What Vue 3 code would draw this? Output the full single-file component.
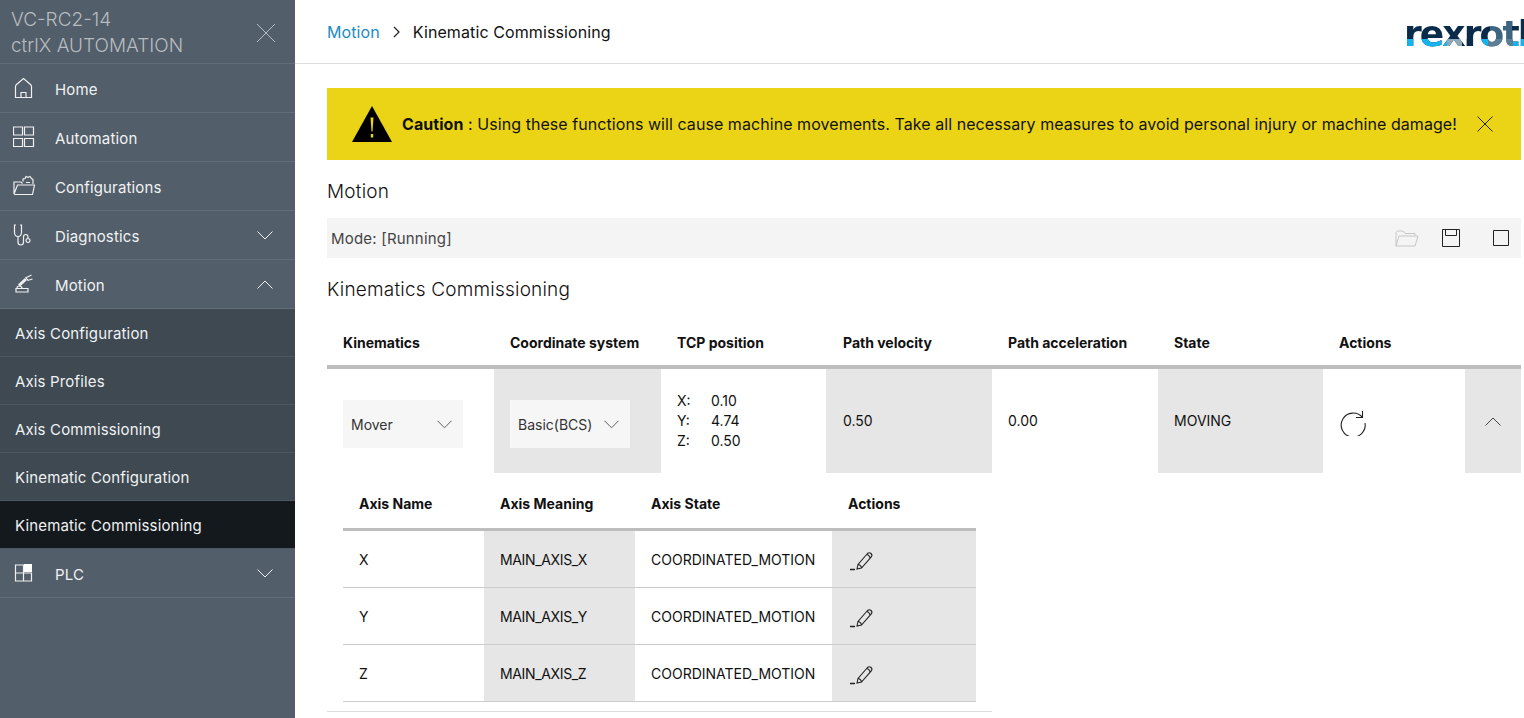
<script setup>
const subs = ['Axis Configuration', 'Axis Profiles', 'Axis Commissioning', 'Kinematic Configuration', 'Kinematic Commissioning']
const axes = [
  { n: 'X', m: 'MAIN_AXIS_X' },
  { n: 'Y', m: 'MAIN_AXIS_Y' },
  { n: 'Z', m: 'MAIN_AXIS_Z' }
]
const heads = ['Kinematics', 'Coordinate system', 'TCP position', 'Path velocity', 'Path acceleration', 'State', 'Actions', '']
</script>

<template>
  <div class="page">
    <aside class="side">
      <div class="brand">
        <div class="brand-text">VC-RC2-14<br />ctrlX AUTOMATION</div>
        <svg class="brand-x" width="20" height="20" viewBox="0 0 20 20"><path d="M1 1 19 19M19 1 1 19" /></svg>
      </div>
      <div class="item">
        <svg class="ic" viewBox="0 0 22 22"><path d="M2.500 20.500V9.500Q2.500 8.500 3.500 7.500L10.500 1.500l7 6q1 1 1 2V20.500ZM8 20.500v-5h5v5" /></svg>
        <span>Home</span>
      </div>
      <div class="item">
        <svg class="ic" viewBox="0 0 22 22"><path d="M.5 1h9v8h-9ZM11.500 1h9v8h-9ZM.5 12.500h9v8h-9ZM11.500 12.500h9v8h-9Z" /></svg>
        <span>Automation</span>
      </div>
      <div class="item">
        <svg class="ic" viewBox="0 0 22 22"><path d="M1 19V7h7l1.500 1.500M1 19.500h18.500L21.500 10H4.500L1 19M10 6.500V4l2-.5 1-2 2 .8 2-.8 1.500 2 1.500 1V9M13 7.500h4" /></svg>
        <span>Configurations</span>
      </div>
      <div class="item">
        <svg class="ic" viewBox="0 0 22 22"><path d="M3 1H1.500v7c0 3 1.800 4.500 3.500 4.500S8.500 11 8.500 8V1H7M5 12.500V18c0 2 1.300 3 2.800 3s2.700-1 2.700-3v-5c0-1.500 1-2.500 2.200-2.500S15 11.500 15 13v1.500M15 14.500a2 2 0 1 0 .01 0" /></svg>
        <span>Diagnostics</span>
        <svg class="chev" viewBox="0 0 16 9"><path d="M.5.500 8 8l7.500-7.500" /></svg>
      </div>
      <div class="item">
        <svg class="ic" viewBox="0 0 22 22"><path d="M3 15.500h12v3.500H3ZM4 15.500c0-2 1-2.500 2-2.500s3 .5 3 2.500M13.500 4.500l5-2.500M14.500 7.500l5-1.500M12.500 4 15 7.500" /><path class="arm" d="M6 12.500 13 6" /></svg>
        <span>Motion</span>
        <svg class="chev" viewBox="0 0 16 9"><path d="M.5 8.500 8 1l7.500 7.500" /></svg>
      </div>
      <div
        v-for="(s, i) in subs"
        :key="s"
        class="sub"
        :class="{ active: i === subs.length - 1 }"
      >{{ s }}</div>
      <div class="item">
        <svg class="ic" viewBox="0 0 22 22"><path d="M2.500 3h8v8h-8ZM2.500 11v8h8v-8M10.500 19h8v-8h-8" /><rect class="fill" x="11" y="2" width="8" height="8" /></svg>
        <span>PLC</span>
        <svg class="chev" viewBox="0 0 16 9"><path d="M.5.500 8 8l7.500-7.500" /></svg>
      </div>
    </aside>

    <main class="main">
      <header class="top">
        <div class="crumbs">
          <span class="link">Motion</span>
          <svg class="crumb-sep" viewBox="0 0 7 12"><path d="M1 1l5 5-5 5" /></svg>
          <span>Kinematic Commissioning</span>
        </div>
        <div class="logo">rexroth</div>
      </header>

      <div class="content">
        <div class="banner">
          <svg class="warn" viewBox="0 0 40 36">
            <path d="M20 0 40 36H0Z" fill="#000" />
            <path d="M18.500 11.500h3l-1 14h-1Z" fill="#ebd416" />
            <rect x="18.800" y="28" width="2.400" height="3.500" fill="#ebd416" />
          </svg>
          <div class="banner-text"><b>Caution</b> : Using these functions will cause machine movements. Take all necessary measures to avoid personal injury or machine damage!</div>
          <svg class="banner-x" viewBox="0 0 16 16"><path d="M.5.500l15 15M15.500.500l-15 15" /></svg>
        </div>

        <h2 class="title first">Motion</h2>
        <div class="toolbar">
          <span>Mode: [Running]</span>
          <div class="tools">
            <svg class="tool t-folder" viewBox="0 0 24 17"><path d="M1 16V2.500L2.500 1H8l2 2.500h10v2.500M1 16h19l3-10H4L1 16Z" /></svg>
            <svg class="tool t-save" viewBox="0 0 18 18"><path d="M.5.500h17v17H.5ZM3.500.500v6h11v-6" /></svg>
            <svg class="tool t-stop" viewBox="0 0 16 16"><path d="M.5.500h15v15H.5Z" /></svg>
          </div>
        </div>
        <h2 class="title second">Kinematics Commissioning</h2>

        <div class="kin">
          <div class="kin-head">
            <div v-for="(h, i) in heads" :key="i" class="kh">{{ h }}</div>
          </div>
          <div class="kin-row">
            <div class="kc">
              <div class="select"><span>Mover</span><svg class="sel-chev" viewBox="0 0 16 9"><path d="M.5.500 8 8l7.500-7.500" /></svg></div>
            </div>
            <div class="kc grey">
              <div class="select"><span>Basic(BCS)</span><svg class="sel-chev" viewBox="0 0 16 9"><path d="M.5.500 8 8l7.500-7.500" /></svg></div>
            </div>
            <div class="kc tcp">
              <div class="tcp-grid">
                <span>X:</span><span>0.10</span>
                <span>Y:</span><span>4.74</span>
                <span>Z:</span><span>0.50</span>
              </div>
            </div>
            <div class="kc grey">0.50</div>
            <div class="kc">0.00</div>
            <div class="kc grey">MOVING</div>
            <div class="kc">
              <svg class="refresh" viewBox="0 0 26 26"><path d="M22.500 7.500A12 12 0 1 0 25 13M22.500 1v6.500H16" /></svg>
            </div>
            <div class="kc grey center">
              <svg class="row-chev" viewBox="0 0 16 9"><path d="M.5 8.500 8 1l7.500 7.500" /></svg>
            </div>
          </div>
        </div>

        <div class="axis-wrap">
          <div class="axis">
            <div class="ah">Axis Name</div>
            <div class="ah">Axis Meaning</div>
            <div class="ah">Axis State</div>
            <div class="ah">Actions</div>
            <template v-for="a in axes" :key="a.n">
              <div class="ac">{{ a.n }}</div>
              <div class="ac grey meaning">{{ a.m }}</div>
              <div class="ac">COORDINATED_MOTION</div>
              <div class="ac grey">
                <svg class="pen" viewBox="0 0 25 20"><path d="M1 18.500h5" stroke-width="1.500" /><path d="M8 18l1-4.500L18.500 2.500c1-1 2.500-1 3.500 0s1.200 2.300.3 3.300L12.500 17ZM9 13.500c1.500 0 3.500 2 3.500 3.500M17.500 3.500c1.500 0 3.500 2 3.500 3.500" /></svg>
              </div>
            </template>
          </div>
        </div>
        <div class="foot-line"></div>
      </div>
    </main>
  </div>
</template>

<style scoped>
.page {
  display: flex;
  width: 1524px;
  height: 718px;
  overflow: hidden;
  background: #fff;
  color: #111;
  font-family: Inter, "Liberation Sans", sans-serif;
  font-size: 14px;
}
.side {
  flex: 0 0 295px;
  background: #525e69;
  color: #f0f2f3;
  font-size: 15px;
  letter-spacing: .15px;
}
.brand {
  height: 64px;
  box-sizing: border-box;
  border-bottom: 1px solid #626e78;
  display: flex;
  justify-content: space-between;
  padding: 7px 19px 0 11px;
  color: #b7bcc1;
  font-size: 19px;
  font-weight: 300;
  line-height: 26px;
  letter-spacing: 0;
}
.brand-x {
  margin-top: 16px;
  fill: none;
  stroke: #b7bcc1;
  stroke-width: 1;
}
.item {
  height: 49px;
  box-sizing: border-box;
  border-bottom: 1px solid #626e78;
  display: flex;
  align-items: center;
  padding: 0 22px 0 13px;
}
.item span {
  margin-left: 20px;
  padding-top: 2px;
  flex: 1;
}
.ic {
  width: 22px;
  height: 22px;
  fill: none;
  stroke: #eef0f1;
  stroke-width: 1.2;
}
.ic .fill {
  fill: #fff;
  stroke: none;
}
.ic .arm {
  stroke-width: 3;
}
.chev {
  width: 16px;
  height: 9px;
  fill: none;
  stroke: #eef0f1;
  stroke-width: 1;
}
.sub {
  height: 48px;
  box-sizing: border-box;
  border-bottom: 1px solid #4c5862;
  background: #3e4952;
  padding-left: 15px;
  line-height: 49px;
}
.sub.active {
  background: #14191d;
  border-bottom-color: #4c5862;
}
.main {
  flex: 1;
  min-width: 0;
}
.top {
  height: 64px;
  box-sizing: border-box;
  border-bottom: 1px solid #dedede;
  display: flex;
  justify-content: space-between;
  align-items: center;
  padding-left: 32px;
  overflow: hidden;
  font-size: 16px;
  letter-spacing: .1px;
}
.crumbs {
  display: flex;
  align-items: center;
  padding-top: 1px;
}
.link {
  color: #1a8bc4;
}
.crumb-sep {
  width: 7px;
  height: 12px;
  margin: 0 13px;
  fill: none;
  stroke: #222;
  stroke-width: 1.2;
}
.logo {
  width: 120px;
  flex: none;
  overflow: hidden;
  white-space: nowrap;
  font-family: "DejaVu Sans", sans-serif;
  font-size: 36px;
  font-weight: 700;
  line-height: 36px;
  height: 36px;
  margin-top: 4px;
  letter-spacing: -1.9px;
  background:
    linear-gradient(90deg, #16b4ee 0 36%, #8fa9ba 36% 48%, #0a2c4a 48% 58%, #16b4ee 58% 70%, #5d7f96 70% 91%, #16b4ee 91%) bottom / 100% 36% no-repeat,
    linear-gradient(90deg, #0a2c4a 0 72%, #3d6480 72% 90%, #0a2c4a 90%);
  -webkit-background-clip: text;
  background-clip: text;
  color: transparent;
}
.content {
  padding: 24px 3px 0 32px;
}
.banner {
  height: 72px;
  background: #ebd416;
  display: flex;
  align-items: center;
  padding: 0 28px 0 25px;
  font-size: 16px;
  letter-spacing: .06px;
}
.warn {
  width: 40px;
  height: 36px;
  flex: none;
}
.banner-text {
  flex: 1;
  margin-left: 10px;
  white-space: nowrap;
}
.banner-x {
  width: 16px;
  height: 16px;
  flex: none;
  fill: none;
  stroke: #222;
  stroke-width: 1;
}
.title {
  margin: 0;
  font-size: 19px;
  font-weight: 300;
  line-height: 26px;
  letter-spacing: .2px;
}
.title.first {
  margin-top: 19px;
  margin-bottom: 13px;
}
.title.second {
  margin-top: 19px;
}
.toolbar {
  height: 40px;
  background: #f4f4f4;
  display: flex;
  align-items: center;
  justify-content: space-between;
  padding-left: 4px;
  font-size: 15px;
  color: #444;
  letter-spacing: .2px;
}
.tools {
  display: flex;
  align-items: center;
}
.tool {
  fill: none;
  stroke: #222;
  stroke-width: 1;
}
.t-folder {
  width: 24px;
  height: 17px;
  stroke: #c6c6c6;
  margin-right: 23px;
}
.t-save {
  width: 18px;
  height: 18px;
  margin-right: 33px;
}
.t-stop {
  width: 16px;
  height: 16px;
  margin-right: 12px;
}
.kin {
  margin-top: 17px;
}
.kin-head,
.kin-row {
  display: grid;
  grid-template-columns: 167px 167px 165px 166px 166px 165px 142px 56px;
}
.kin-head {
  height: 49px;
  box-sizing: border-box;
  border-bottom: 4px solid #bdbdbd;
}
.kh {
  padding: 14px 0 0 16px;
  font-weight: 700;
  font-size: 14px;
}
.kin-row {
  height: 104px;
}
.kc {
  display: flex;
  align-items: center;
  padding-left: 16px;
  padding-bottom: 2px;
  font-size: 14px;
}
.kh:nth-child(4),
.kc:nth-child(4) {
  padding-left: 17px;
}
.grey {
  background: #e6e6e6;
}
.center {
  justify-content: center;
  padding-left: 0;
}
.select {
  width: 120px;
  height: 48px;
  box-sizing: border-box;
  margin-top: 8px;
  background: #f6f6f6;
  display: flex;
  align-items: center;
  justify-content: space-between;
  padding: 0 11px 0 8px;
  color: #333;
}
.sel-chev {
  width: 15px;
  height: 9px;
  fill: none;
  stroke: #555;
  stroke-width: 1;
}
.tcp-grid {
  display: grid;
  grid-template-columns: 34px auto;
  line-height: 20px;
  font-size: 14px;
  margin-top: 1px;
}
.refresh {
  width: 26px;
  height: 26px;
  margin: 6px 0 0 1px;
  fill: none;
  stroke: #222;
  stroke-width: 1.1;
}
.row-chev {
  width: 16px;
  height: 9px;
  margin-top: 2px;
  fill: none;
  stroke: #444;
  stroke-width: 1;
}
.axis-wrap {
  padding: 7px 0 0 16px;
}
.axis {
  width: 633px;
  display: grid;
  grid-template-columns: 141px 151px 197px 144px;
  grid-template-rows: 51px repeat(3, 57px);
}
.ah {
  box-sizing: border-box;
  border-bottom: 3px solid #bdbdbd;
  padding: 15px 0 0 16px;
  font-weight: 700;
  font-size: 14px;
}
.ac {
  display: flex;
  align-items: center;
  padding-left: 16px;
  border-bottom: 1px solid #ccc;
  box-sizing: border-box;
}
.meaning {
  letter-spacing: -.35px;
}
.pen {
  width: 25px;
  height: 20px;
  margin: 3px 0 0 1px;
  fill: none;
  stroke: #222;
  stroke-width: 1.1;
}
.foot-line {
  width: 665px;
  margin-top: 9px;
  border-top: 1px solid #dedede;
}
</style>
